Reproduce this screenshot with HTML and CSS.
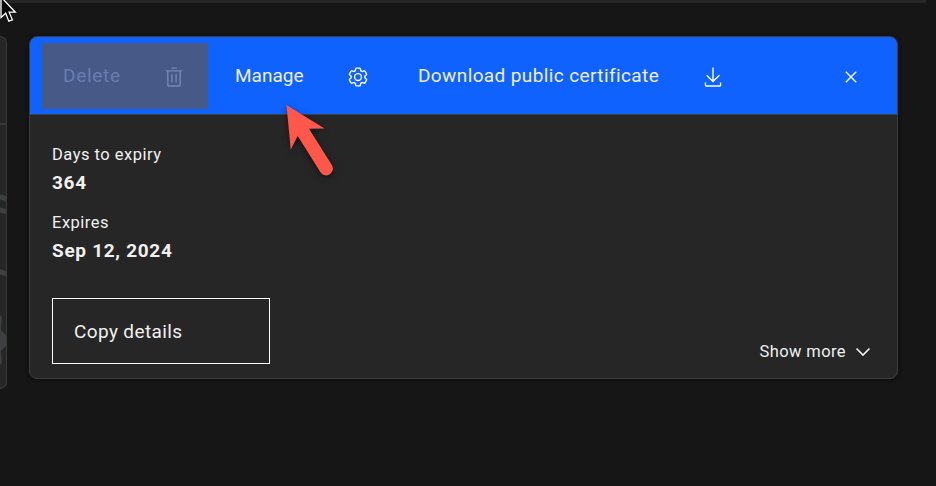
FILE: index.html
```html
<!DOCTYPE html>
<html lang="en">
<head>
<meta charset="utf-8">
<title>Certificate details</title>
<link rel="stylesheet" href="styles.css">
</head>
<body>
<div class="top-line"></div>
<main class="cards">
  <section class="neighbor">
    <div class="neighbor-head"></div>
    <svg class="neighbor-art" viewBox="0 0 6 262" width="6" height="262"><g fill="none" stroke="#3d4040" stroke-width="5"><path d="M-2 71.500 Q2 72 7 74M-2 84.500 Q2 85 7 87M-2 146.500 Q2 147 7 149"/></g><path d="M0 190l2 2-1 13 5 5v11l-5 5 1 12-2 2z" fill="#3d4040"/></svg>
  </section>
  <section class="card">
    <header class="actions">
      <button class="action delete" disabled><span>Delete</span>
        <svg class="icon" viewBox="0 0 32 32"><path d="M12 12h2v12h-2zM18 12h2v12h-2zM4 6v2h2v20a2 2 0 0 0 2 2h16a2 2 0 0 0 2-2V8h2V6zm4 22V8h16v20zM12 2h8v2h-8z"/></svg>
      </button>
      <button class="action manage"><span>Manage</span>
        <svg class="icon gear" viewBox="0 0 32 32"><path d="M27 16.760c0-.25 0-.5 0-.76s0-.51 0-.77l1.920-1.680A2 2 0 0 0 29.300 11L26.940 7a2 2 0 0 0-1.730-1 2 2 0 0 0-.64.1l-2.430.82a11.350 11.350 0 0 0-1.310-.75l-.51-2.520a2 2 0 0 0-2-1.610h-4.680a2 2 0 0 0-2 1.610l-.51 2.520a11.480 11.480 0 0 0-1.320.75l-2.380-.86A2 2 0 0 0 6.790 6 2 2 0 0 0 5.060 7L2.700 11a2 2 0 0 0 .41 2.510L5 15.240c0 .25 0 .5 0 .76s0 .51 0 .77l-1.890 1.680A2 2 0 0 0 2.700 21l2.360 4a2 2 0 0 0 1.730 1 2 2 0 0 0 .64-.1l2.430-.82a11.350 11.350 0 0 0 1.310.75l.51 2.520a2 2 0 0 0 2 1.610h4.720a2 2 0 0 0 2-1.610l.51-2.520a11.480 11.480 0 0 0 1.320-.75l2.420.82a2 2 0 0 0 .64.1 2 2 0 0 0 1.730-1l2.280-4a2 2 0 0 0-.41-2.510zM25.210 24l-3.430-1.160a8.860 8.860 0 0 1-2.710 1.570L18.360 28h-4.720l-.71-3.550a9.360 9.360 0 0 1-2.700-1.570L6.790 24l-2.360-4 2.720-2.400a8.900 8.900 0 0 1 0-3.130L4.430 12l2.360-4 3.430 1.160a8.860 8.860 0 0 1 2.710-1.570L13.640 4h4.720l.71 3.550a9.360 9.360 0 0 1 2.700 1.570L25.210 8l2.360 4-2.720 2.400a8.900 8.900 0 0 1 0 3.130L27.570 20zM16 22a6 6 0 1 1 6-6 5.940 5.940 0 0 1-6 6zm0-10a3.910 3.910 0 0 0-4 4 3.910 3.910 0 0 0 4 4 3.910 3.910 0 0 0 4-4 3.910 3.910 0 0 0-4-4z"/></svg>
      </button>
      <button class="action download"><span>Download public certificate</span>
        <svg class="icon" viewBox="0 0 32 32"><path d="M26 24v4H6v-4H4v4a2 2 0 0 0 2 2h20a2 2 0 0 0 2-2v-4zM26 14l-1.410-1.410L17 20.170V2h-2v18.170l-7.590-7.580L6 14l10 10z"/></svg>
      </button>
      <button class="close" aria-label="Close"><svg viewBox="0 0 12 12" width="12" height="12"><path d="M.8.8l10.400 10.400M11.200.8L.8 11.200" fill="none" stroke="#fff" stroke-width="1.350"/></svg></button>
    </header>
    <div class="body">
      <dl class="facts">
        <dt class="days">Days to expiry</dt><dd class="count">364</dd>
        <dt class="expires">Expires</dt><dd class="date">Sep 12, 2024</dd>
      </dl>
      <div class="foot">
        <button class="copy">Copy details</button>
        <button class="more"><span>Show more</span><svg viewBox="0 0 16 10" width="16" height="10"><path d="M1.500 1.500L8 8l6.500-6.500" fill="none" stroke="#f4f4f4" stroke-width="1.600"/></svg></button>
      </div>
    </div>
  </section>
</main>
<svg class="pointer" viewBox="0 0 60 90" width="60" height="90"><path d="M6.500 4l38 23.500-15.500.3 22.800 36.200a6.700 6.700 0 0 1-11.300 7.300L17.700 35l-7 13.500z" fill="#ff574a"/></svg>
<svg class="cursor" viewBox="0 0 17 24" width="17" height="24"><path d="M1-3v20.500l4.700-4.300 3.100 8 3.600-1.400-3.300-7.600h6.200z" fill="#050505" stroke="#fff" stroke-width="1.300"/></svg>
</body>
</html>
```
FILE: styles.css
```css
* { box-sizing: border-box; }
body {
  margin: 0;
  width: 936px;
  height: 486px;
  overflow: hidden;
  background: #161616;
  color: #f0f0f0;
  font-family: Roboto, "Liberation Sans", sans-serif;
  font-weight: 400;
}
button {
  margin: 0;
  padding: 0;
  border: 0;
  background: none;
  color: inherit;
  font: inherit;
  text-align: left;
}
span, dt, dd, .copy { white-space: nowrap; }
.top-line { width: 926px; height: 3px; background: #262626; }
.cards { display: flex; align-items: flex-start; gap: 22px; padding-top: 33px; }
.neighbor {
  width: 7px;
  height: 353px;
  border: 1px solid #393939;
  border-left: 0;
  border-radius: 0 8px 8px 0;
  background: #262626;
  overflow: hidden;
}
.neighbor-head { height: 88px; border-bottom: 2px solid #393939; }
.neighbor-art { display: block; }
.card {
  width: 869px;
  height: 343px;
  border: 1px solid #3d3d3d;
  border-radius: 8px;
  background: #262626;
  overflow: hidden;
  box-shadow: 0 1px 4px #0d0d0d;
}
.actions {
  display: flex;
  align-items: center;
  height: 78px;
  padding: 0 37px 0 12px;
  border-bottom: 1px solid #414141;
  background: #0f62fe;
  font-size: 19px;
}
.action { display: flex; align-items: center; height: 66px; justify-content: space-between; }
.action span { line-height: 24px; margin-top: 0; }
.icon { width: 22px; height: 22px; fill: #fff; flex: none; margin-top: 3px; }
.delete { width: 166px; padding: 0 23px 0 21px; background: #465987; color: #697db2; letter-spacing: .7px; }
.delete .icon { fill: #7788b9; }
.manage { width: 134px; margin-left: 27px; letter-spacing: 0; }
.download { width: 306px; margin-left: 49px; letter-spacing: .39px; }
.close { display: flex; margin-left: auto; padding: 3px 3px 0; }
.body { display: flex; flex-direction: column; justify-content: space-between; height: 264px; padding: 29px 24px 15px 22px; }
.facts { margin: 0; }
dt { height: 24px; font-size: 16.5px; line-height: 22px; letter-spacing: .5px; }
dd { height: 32px; margin: 0 0 12px; font-size: 19px; line-height: 30px; font-weight: 700; letter-spacing: .7px; }
.foot { display: flex; justify-content: space-between; align-items: flex-end; }
.copy { width: 218px; height: 66px; padding-left: 21px; border: 1.500px solid #fff; font-size: 19px; letter-spacing: .38px; }
.more { display: flex; align-items: center; gap: 9px; margin: 0 2px 3px 0; font-size: 16.5px; letter-spacing: .4px; }
.pointer { position: absolute; left: 280px; top: 101px; filter: drop-shadow(0 2px 3px rgba(0, 0, 0, .5)); }
.cursor { position: absolute; left: 0; top: 0; }
```
